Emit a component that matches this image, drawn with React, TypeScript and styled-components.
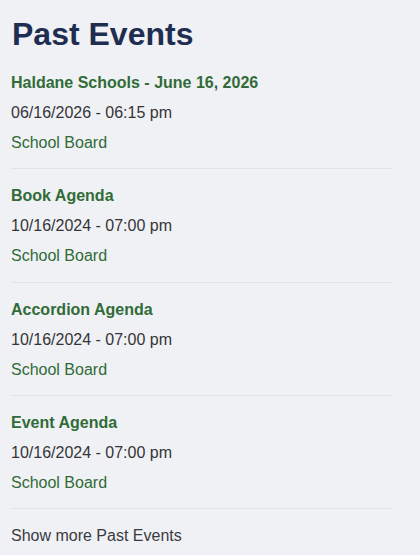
import React from "react";
import styled, { createGlobalStyle } from "styled-components";

const Global = createGlobalStyle`
  html, body { margin: 0; padding: 0; background: #f0f1f5; }
  body { font-family: "Liberation Sans", Arial, Helvetica, sans-serif; }
`;

const Page = styled.main`
  width: 382px;
  padding: 0 0 0 11px;
  background: #f0f1f5;
  min-height: 555px;
  box-sizing: content-box;
`;

const Heading = styled.h2`
  margin: 0 0 4px;
  padding: 16px 0 0 1px;
  font-size: 32px;
  line-height: 36px;
  font-weight: 700;
  color: #1f2e50;
`;

const List = styled.ul`
  list-style: none;
  margin: 0;
  padding: 0;
`;

const Item = styled.li`
  display: flex;
  flex-direction: column;
  padding: 12px 0 10.33px;
  border-bottom: 1px solid #e1e3e8;
`;

const Line = styled.div<{ $tone: "title" | "date" | "tag" }>`
  font-size: 16px;
  line-height: 30px;
  font-weight: ${(p) => (p.$tone === "title" ? 700 : 400)};
  color: ${(p) => (p.$tone === "date" ? "#343538" : "#316b37")};
`;

const ShowMore = styled.a`
  display: block;
  padding-top: 12px;
  font-size: 16px;
  line-height: 30px;
  color: #3a3b3f;
  text-decoration: none;
  cursor: pointer;
`;

const events = [
  { title: "Haldane Schools - June 16, 2026", date: "06/16/2026 - 06:15 pm", tag: "School Board" },
  { title: "Book Agenda", date: "10/16/2024 - 07:00 pm", tag: "School Board" },
  { title: "Accordion Agenda", date: "10/16/2024 - 07:00 pm", tag: "School Board" },
  { title: "Event Agenda", date: "10/16/2024 - 07:00 pm", tag: "School Board" },
];

export default function App() {
  return (
    <>
      <Global />
      <Page>
        <Heading>Past Events</Heading>
        <List>
          {events.map((e) => (
            <Item key={e.title}>
              <Line $tone="title">{e.title}</Line>
              <Line $tone="date">{e.date}</Line>
              <Line $tone="tag">{e.tag}</Line>
            </Item>
          ))}
        </List>
        <ShowMore>Show more Past Events</ShowMore>
      </Page>
    </>
  );
}
